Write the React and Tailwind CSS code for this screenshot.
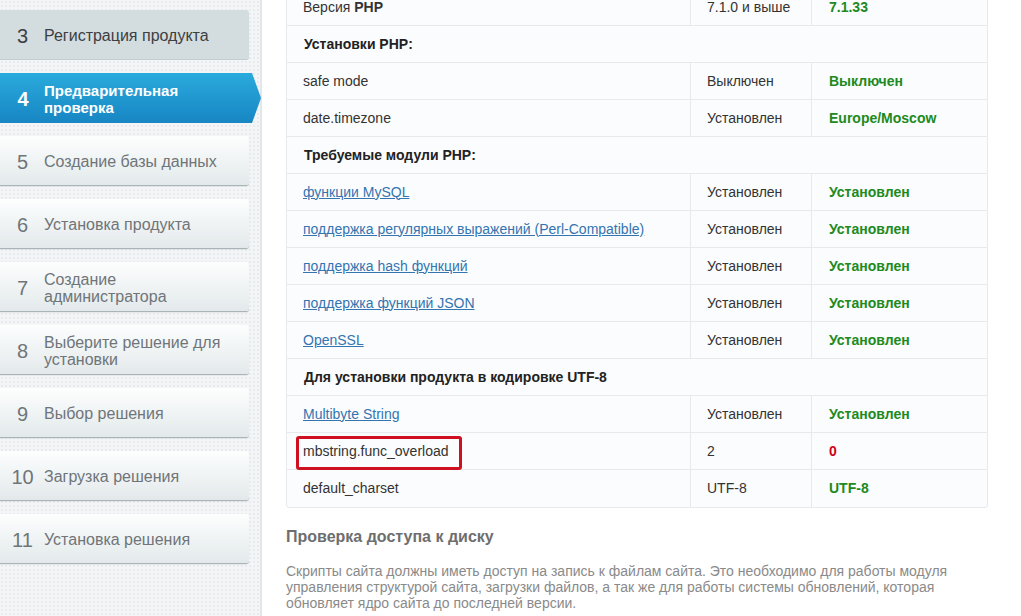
import React from 'react';

const steps = [
  { n: 3, label: 'Регистрация продукта', state: 'done' },
  { n: 4, label: 'Предварительная проверка', state: 'active' },
  { n: 5, label: 'Создание базы данных' },
  { n: 6, label: 'Установка продукта' },
  { n: 7, label: 'Создание администратора' },
  { n: 8, label: 'Выберите решение для установки' },
  { n: 9, label: 'Выбор решения' },
  { n: 10, label: 'Загрузка решения' },
  { n: 11, label: 'Установка решения' },
];

// type: row | head
const rows = [
  { name: <>Версия <b>PHP</b></>, need: '7.1.0 и выше', cur: '7.1.33' },
  { head: 'Установки PHP:' },
  { name: 'safe mode', need: 'Выключен', cur: 'Выключен' },
  { name: 'date.timezone', need: 'Установлен', cur: 'Europe/Moscow' },
  { head: 'Требуемые модули PHP:' },
  { name: 'функции MySQL', link: true, need: 'Установлен', cur: 'Установлен' },
  { name: 'поддержка регулярных выражений (Perl-Compatible)', link: true, need: 'Установлен', cur: 'Установлен' },
  { name: 'поддержка hash функций', link: true, need: 'Установлен', cur: 'Установлен' },
  { name: 'поддержка функций JSON', link: true, need: 'Установлен', cur: 'Установлен' },
  { name: 'OpenSSL', link: true, need: 'Установлен', cur: 'Установлен' },
  { head: 'Для установки продукта в кодировке UTF-8' },
  { name: 'Multibyte String', link: true, need: 'Установлен', cur: 'Установлен' },
  { name: 'mbstring.func_overload', need: '2', cur: '0', bad: true, marked: true },
  { name: 'default_charset', need: 'UTF-8', cur: 'UTF-8' },
];

const Step = ({ step }) => {
  if (step.state === 'active') {
    return (
      <div className="h-[50px] w-[261px] flex items-center pt-[2px] text-white bg-gradient-to-b from-[#2aaadc] to-[#1786c3] [clip-path:polygon(0_0,calc(100%-9px)_0,100%_50%,calc(100%-9px)_100%,0_100%)]">
        <span className="w-[44px] text-center text-[20px] font-bold pl-[2px]">{step.n}</span>
        <span className="text-[15px] font-bold leading-[17px] w-[160px]">{step.label}</span>
      </div>
    );
  }
  const done = step.state === 'done';
  return (
    <div
      className={
        done
          ? 'h-[50px] w-[249px] flex items-center pt-[2px] rounded-r-[3px] bg-[#d3dcdf] text-[#3c4042] border-b border-[#c3cdd1]'
          : 'h-[50px] w-[249px] flex items-center pt-[2px] rounded-r-[3px] bg-gradient-to-b from-[#fdfefe] to-[#e3e9eb] text-[#6f7579] border-b border-[#a9b4b8] shadow-[0_1px_1px_rgba(0,0,0,0.06)]'
      }
    >
      <span className="w-[44px] text-center text-[20px] pl-[1px]">{step.n}</span>
      <span className="text-[16px] leading-[17px] w-[185px]">{step.label}</span>
    </div>
  );
};

export default function App() {
  return (
    <div className="flex w-[1021px] h-[616px] overflow-hidden bg-white font-['Liberation_Sans',Arial,sans-serif]">
      {/* Sidebar */}
      <div className="w-[262px] shrink-0 h-full border-r-2 border-[#e2e6e8] bg-[#f3f5f6] bg-[radial-gradient(#e7ebed_1px,transparent_1px)] bg-[size:4px_4px] pt-[10px] flex flex-col gap-[13px]">
        {steps.map((s) => (
          <Step key={s.n} step={s} />
        ))}
      </div>

      {/* Content */}
      <div className="flex-1 pl-[24px] pr-[33px]">
        <div className="-mt-[12px] w-[702px] rounded-[3px] border border-[#e6eaed] bg-[#fbfcfd] text-[14px] text-[#333]">
          {rows.map((r, i) => {
            const last = i === rows.length - 1;
            const rowCls = last ? 'h-[37px] flex' : 'h-[37px] flex border-b border-[#e6eaed]';
            if (r.head) {
              return (
                <div key={i} className={rowCls}>
                  <div className="flex items-center pl-[17px] font-bold text-[#222]">{r.head}</div>
                </div>
              );
            }
            return (
              <div key={i} className={rowCls}>
                <div className="relative w-[404px] shrink-0 border-r border-[#e6eaed] flex items-center pl-[16px]">
                  {r.link ? (
                    <a href="#" className="text-[#3474b0] underline">{r.name}</a>
                  ) : (
                    <span>{r.name}</span>
                  )}
                  {r.marked && (
                    <div className="absolute left-[9px] top-[3px] w-[166px] h-[34px] border-[3px] border-[#cf1020] rounded-[3px]"></div>
                  )}
                </div>
                <div className="w-[121px] shrink-0 border-r border-[#e6eaed] flex items-center pl-[16px]">{r.need}</div>
                <div className={r.bad ? 'flex-1 flex items-center pl-[17px] font-bold text-[#d0021b]' : 'flex-1 flex items-center pl-[17px] font-bold text-[#208a20]'}>
                  {r.cur}
                </div>
              </div>
            );
          })}
        </div>

        <h2 className="mt-[19px] text-[16px] leading-[19px] font-bold text-[#6e6e6e]">Проверка доступа к диску</h2>
        <p className="mt-[17px] w-[702px] text-[14px] leading-[16px] text-[#8a8a8a]">
          Скрипты сайта должны иметь доступ на запись к файлам сайта. Это необходимо для работы модуля управления структурой сайта, загрузки файлов, а так же для работы системы обновлений, которая обновляет ядро сайта до последней версии.
        </p>
      </div>
    </div>
  );
}
